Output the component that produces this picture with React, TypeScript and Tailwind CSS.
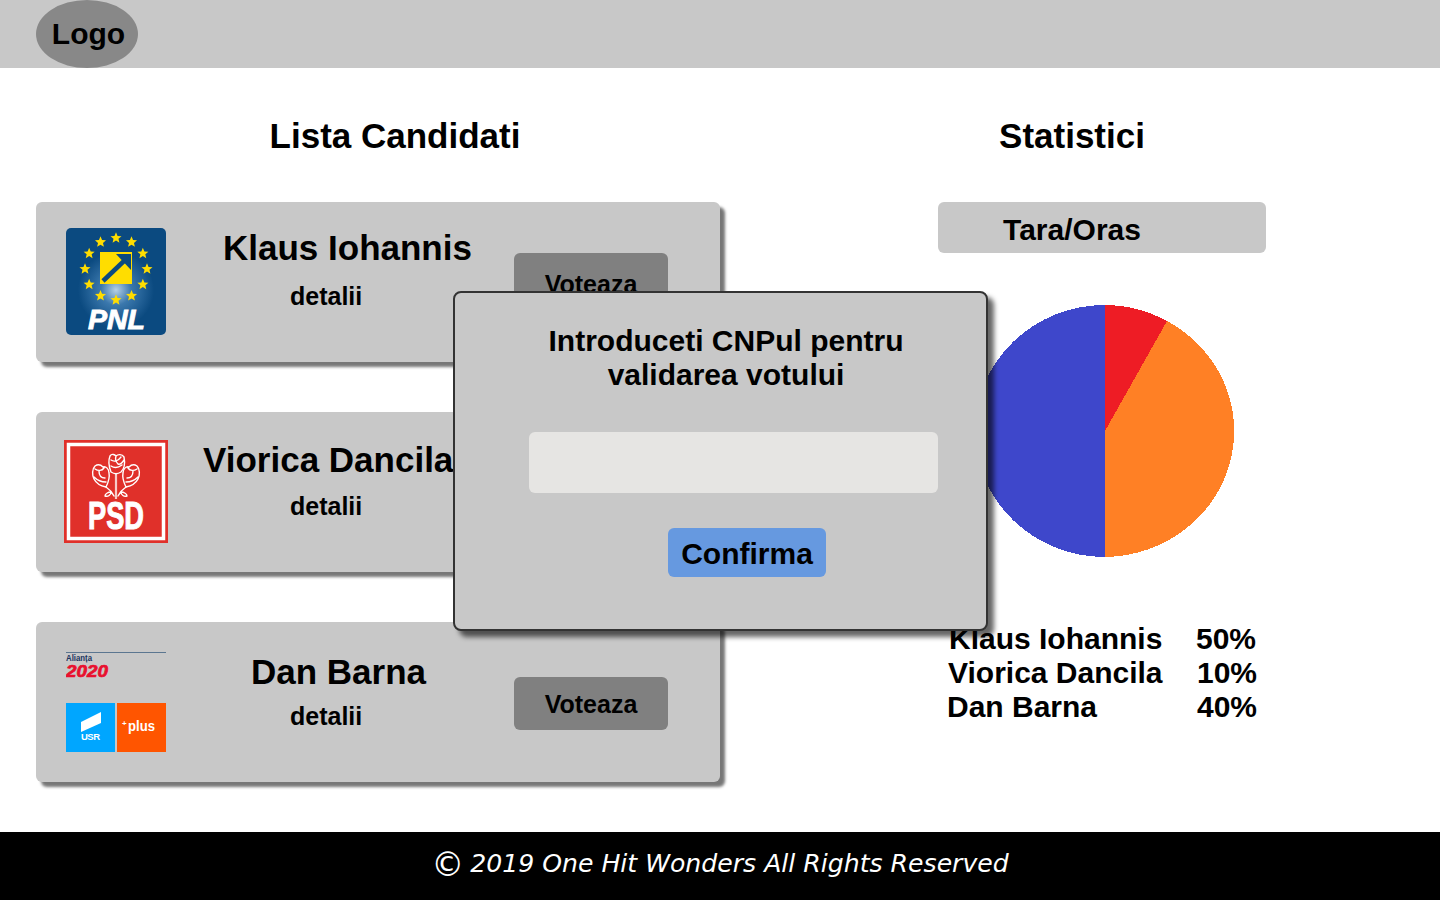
import React from "react";

const candidates = [
  { name: "Klaus Iohannis", nameClass: "pl-[57px] mt-[26px]", detailClass: "mt-[13px]", logo: "pnl", logoClass: "ml-[30px] mt-[26px]", midClass: "", btnClass: "mt-[51px] pt-[10px]" },
  { name: "Viorica Dancila", nameClass: "pl-[37px] mt-[28px]", detailClass: "mt-[11px]", logo: "psd", logoClass: "ml-[28px] mt-[28px]", midClass: "ml-[-2px]", btnClass: "mt-[51px] pt-[10px]" },
  { name: "Dan Barna", nameClass: "pl-[85px] mt-[30px]", detailClass: "mt-[9px]", logo: "alianta", logoClass: "ml-[30px] mt-[30px]", midClass: "", btnClass: "mt-[55px] pt-[2px]" },
];

const results = [
  { name: "Klaus Iohannis", pct: "50%", rowClass: "ml-[11px]", nameClass: "w-[247px]" },
  { name: "Viorica Dancila", pct: "10%", rowClass: "ml-[10px]", nameClass: "w-[249px]" },
  { name: "Dan Barna", pct: "40%", rowClass: "ml-[9px]", nameClass: "w-[250px]" },
];

const starPoints = (cx: number, cy: number, r: number) => {
  const pts: string[] = [];
  for (let i = 0; i < 10; i++) {
    const rad = i % 2 === 0 ? r : r * 0.45;
    const a = (Math.PI / 5) * i - Math.PI / 2;
    pts.push(`${cx + rad * Math.cos(a)},${cy + rad * Math.sin(a)}`);
  }
  return pts.join(" ");
};

const PnlLogo = () => (
  <svg width="100" height="107" viewBox="0 0 100 107" className="block">
    <defs>
      <radialGradient id="pnlGlow" cx="50" cy="62" r="38" gradientUnits="userSpaceOnUse">
        <stop offset="0" stopColor="#b5d0e6" />
        <stop offset="0.4" stopColor="#3b78ad" />
        <stop offset="1" stopColor="#0b4a80" />
      </radialGradient>
    </defs>
    <rect width="100" height="107" rx="5" fill="url(#pnlGlow)" />
    {Array.from({ length: 12 }).map((_, i) => {
      const a = (Math.PI / 6) * i;
      return (
        <polygon
          key={i}
          points={starPoints(50 + 31 * Math.sin(a), 41 - 31 * Math.cos(a), 5.8)}
          fill="#ffdd00"
        />
      );
    })}
    <rect x="34" y="24" width="32" height="32" fill="#ffdd00" />
    <path d="M37 53 L58 33" stroke="#0b4a80" strokeWidth="4.5" />
    <polygon points="50,26 65,26 65,42" fill="#0b4a80" />
    <text
      x="22"
      y="101"
      fill="#fff"
      stroke="#fff"
      strokeWidth="0.9"
      fontFamily="'Liberation Sans', sans-serif"
      fontWeight="700"
      fontStyle="italic"
      fontSize="28"
      textLength="57"
      lengthAdjust="spacingAndGlyphs"
    >
      PNL
    </text>
  </svg>
);

const Rose = ({ d }: { d: string }) => (
  <path d={d} fill="none" stroke="#fff" strokeWidth="1.4" strokeLinejoin="round" strokeLinecap="round" />
);

const PsdLogo = () => (
  <svg width="104" height="103" viewBox="0 0 104 103" className="block">
    <rect width="104" height="103" fill="#e0302a" />
    <rect x="4.5" y="4.5" width="95" height="94" fill="#e0302a" stroke="#fff" strokeWidth="3.5" />
    {/* center rose */}
    <Rose d="M46 16 C48 13 51 15 52 16 C54 14 58 14 60 17 C61 22 61 28 57 32 C54 34 50 34 47 32 C45 27 44 21 46 16 Z M47 20 C50 22 54 21 57 17 M52 16 C51 19 52 22 54 24 C56 25 58 23 60 20 M47 26 C50 28 54 28 58 25" />
    {/* left rose */}
    <Rose d="M31 26 C34 24 37 25 39 27 C42 26 45 29 45 33 C46 38 44 43 42 47 C37 46 32 43 30 39 C28 35 28 29 31 26 Z M31 29 C34 31 38 31 40 28 M35 31 C35 35 37 38 41 38 M30 37 C33 40 37 42 42 42" />
    {/* right rose */}
    <Rose d="M73 26 C70 24 67 25 65 27 C62 26 59 29 59 33 C58 38 60 43 62 47 C67 46 72 43 74 39 C76 35 76 29 73 26 Z M73 29 C70 31 66 31 64 28 M69 31 C69 35 67 38 63 38 M74 37 C71 40 67 42 62 42" />
    <path d="M52 34 L52 59" stroke="#fff" strokeWidth="2.2" opacity="0.75" />
    <Rose d="M42 47 C45 49 48 52 50 56 M62 47 C59 49 56 52 54 56 M47 52 C44 52 41 54 41 56 C44 57 47 55 47 52 Z M57 52 C60 52 63 54 63 56 C60 57 57 55 57 52 Z" />
    <text
      x="24"
      y="89"
      fill="#fff"
      stroke="#fff"
      strokeWidth="1"
      fontFamily="'Liberation Sans', sans-serif"
      fontWeight="700"
      fontSize="38"
      textLength="56"
      lengthAdjust="spacingAndGlyphs"
    >
      PSD
    </text>
  </svg>
);

const AliantaLogo = () => (
  <svg width="100" height="100" viewBox="0 0 100 100" className="block">
    <rect width="100" height="1" fill="#5b7690" />
    <text x="0" y="9" fill="#1b3560" fontFamily="'Liberation Sans', sans-serif" fontSize="8.5" textLength="26" lengthAdjust="spacingAndGlyphs">
      Alianța
    </text>
    <text
      x="0"
      y="25"
      fill="#e8102e"
      stroke="#e8102e"
      strokeWidth="0.7"
      fontFamily="'Liberation Sans', sans-serif"
      fontWeight="700"
      fontStyle="italic"
      fontSize="17"
      textLength="42"
      lengthAdjust="spacingAndGlyphs"
    >
      2020
    </text>
    <rect x="0" y="51" width="49" height="49" fill="#00a6ff" />
    <rect x="51" y="51" width="49" height="49" fill="#ff5500" />
    <polygon points="15,70 35,60 35,71 15,80" fill="#fff" />
    <text x="15" y="88" fill="#fff" fontFamily="'Liberation Sans', sans-serif" fontSize="9.5" textLength="19">
      USR
    </text>
    <text x="56" y="74" fill="#fff" fontFamily="'Liberation Sans', sans-serif" fontSize="8">
      +
    </text>
    <text x="62" y="79" fill="#fff" fontFamily="'Liberation Sans', sans-serif" fontSize="15.5" textLength="27" lengthAdjust="spacingAndGlyphs">
      plus
    </text>
  </svg>
);

const logos: Record<string, React.ReactNode> = {
  pnl: <PnlLogo />,
  psd: <PsdLogo />,
  alianta: <AliantaLogo />,
};

const Pie = () => (
  <svg width="262" height="253" viewBox="0 0 262 253" className="block ml-[37px] mt-[52px]" shapeRendering="crispEdges">
    <path d="M130 126 L130 0 A130 126 0 0 0 130 252 Z" fill="#3e47cb" />
    <path d="M130 126 L192 16 A131 126 0 0 1 130 252 Z" fill="#ff8025" />
    <path d="M130 126 L130 0 A130 126 0 0 1 192 16 Z" fill="#ee1c25" />
  </svg>
);

export default function App() {
  return (
    <div className="relative flex flex-col h-screen overflow-hidden bg-white text-black font-['Liberation_Sans',Arial,sans-serif] font-bold">
      <header className="h-[68px] shrink-0 bg-[#c8c8c8] pl-[36px]">
        <div className="w-[102px] h-[68px] pl-[3px] pb-[2px] rounded-[50%] bg-[#888888] flex items-center justify-center text-[30px]">
          Logo
        </div>
      </header>

      <main className="flex-1 flex">
        <section className="ml-[36px] w-[684px] shrink-0">
          <h2 className="w-[718px] mt-[48px] mb-[46px] text-center text-[35px] leading-[40px] font-bold">Lista Candidati</h2>
          <div className="flex flex-col gap-[50px]">
            {candidates.map((c) => (
              <div key={c.name} className="flex h-[160px] rounded-[6px] bg-[#c8c8c8] shadow-[5px_5px_3px_#777]">
                <div className={`${c.logoClass} shrink-0`}>{logos[c.logo]}</div>
                <div className={`flex-1 min-w-0 ${c.midClass}`}>
                  <div className={`${c.nameClass} h-[40px] text-[35px] leading-[40px] whitespace-nowrap`}>{c.name}</div>
                  <div className={`${c.detailClass} pl-[124px] text-[25px] leading-[30px]`}>detalii</div>
                </div>
                <button className={`${c.btnClass} mr-[52px] w-[154px] h-[53px] shrink-0 rounded-[6px] bg-[#808080] text-[25px] font-bold text-black`}>
                  Voteaza
                </button>
              </div>
            ))}
          </div>
        </section>

        <section className="ml-[218px] w-[328px] shrink-0">
          <h2 className="w-[268px] mt-[48px] mb-[46px] text-center text-[35px] leading-[40px] font-bold">Statistici</h2>
          <div className="h-[51px] rounded-[6px] bg-[#c8c8c8] w-full">
            <div className="w-[268px] text-center text-[30px] leading-[56px]">Tara/Oras</div>
          </div>
          <Pie />
          <div className="mt-[64px] text-[30px] leading-[34px]">
            {results.map((r) => (
              <div key={r.name} className={`flex whitespace-nowrap ${r.rowClass}`}>
                <span className={r.nameClass}>{r.name}</span>
                <span>{r.pct}</span>
              </div>
            ))}
          </div>
        </section>
      </main>

      <footer className="h-[68px] shrink-0 pb-[4px] bg-black flex items-center justify-center gap-[6px] text-white font-['DejaVu_Sans',sans-serif] font-normal italic text-[25.15px]">
        <span className="not-italic text-[33px] leading-none">©</span>
        <span>2019 One Hit Wonders All Rights Reserved</span>
      </footer>

      {/* vote confirmation modal */}
      <div className="absolute left-[453px] top-[291px] w-[535px] h-[340px] rounded-[8px] border-2 border-[#333] bg-[#c8c8c8] shadow-[6px_6px_5px_rgba(0,0,0,0.6)]">
        <p className="mt-[31px] ml-[11px] text-center text-[30px] leading-[34px]">
          Introduceti CNPul pentru
          <br />
          validarea votului
        </p>
        <input className="block ml-[74px] mt-[40px] w-[409px] h-[61px] rounded-[6px] bg-[#e6e5e3] outline-none" />
        <button className="block ml-[213px] mt-[35px] pt-[2px] w-[158px] h-[49px] rounded-[6px] bg-[#6699e0] text-[30px] font-bold text-black">
          Confirma
        </button>
      </div>
    </div>
  );
}
